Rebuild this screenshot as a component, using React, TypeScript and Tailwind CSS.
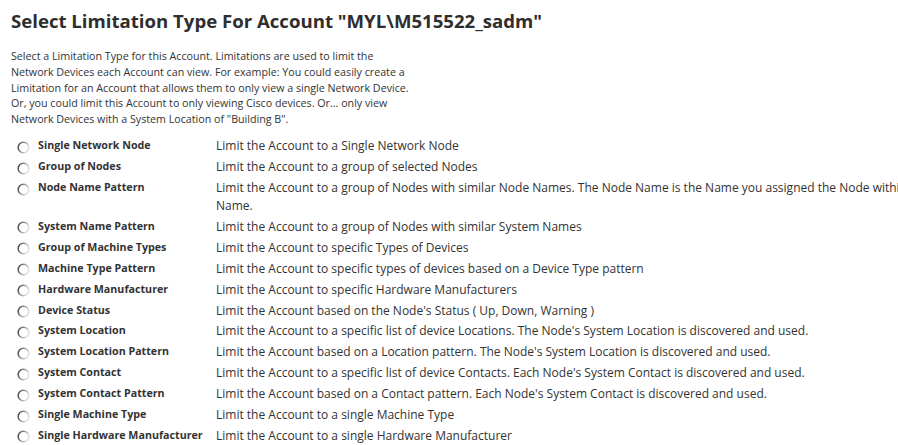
const limitations = [
  { name: 'Single Network Node', desc: 'Limit the Account to a Single Network Node' },
  { name: 'Group of Nodes', desc: 'Limit the Account to a group of selected Nodes' },
  {
    name: 'Node Name Pattern',
    desc: 'Limit the Account to a group of Nodes with similar Node Names. The Node Name is the Name you assigned the Node within Name.',
  },
  { name: 'System Name Pattern', desc: 'Limit the Account to a group of Nodes with similar System Names' },
  { name: 'Group of Machine Types', desc: 'Limit the Account to specific Types of Devices' },
  { name: 'Machine Type Pattern', desc: 'Limit the Account to specific types of devices based on a Device Type pattern' },
  { name: 'Hardware Manufacturer', desc: 'Limit the Account to specific Hardware Manufacturers' },
  { name: 'Device Status', desc: "Limit the Account based on the Node's Status ( Up, Down, Warning )" },
  {
    name: 'System Location',
    desc: "Limit the Account to a specific list of device Locations. The Node's System Location is discovered and used.",
  },
  {
    name: 'System Location Pattern',
    desc: "Limit the Account based on a Location pattern. The Node's System Location is discovered and used.",
  },
  {
    name: 'System Contact',
    desc: "Limit the Account to a specific list of device Contacts. Each Node's System Contact is discovered and used.",
  },
  {
    name: 'System Contact Pattern',
    desc: "Limit the Account based on a Contact pattern. Each Node's System Contact is discovered and used.",
  },
  { name: 'Single Machine Type', desc: 'Limit the Account to a single Machine Type' },
  { name: 'Single Hardware Manufacturer', desc: 'Limit the Account to a single Hardware Manufacturer' },
];

function Radio() {
  return (
    <svg width="13" height="13" viewBox="0 0 13 13" className="block">
      <defs>
        <linearGradient id="ring" x1="0" y1="0" x2="1" y2="0.4">
          <stop offset="0" stopColor="#3a3a3a" />
          <stop offset="0.55" stopColor="#9a9a9a" />
          <stop offset="1" stopColor="#e0e0e0" />
        </linearGradient>
      </defs>
      <circle cx="6.5" cy="6.5" r="5.3" fill="#fff" stroke="url(#ring)" strokeWidth="1.6" />
    </svg>
  );
}

export default function App() {
  return (
    <div
      className="h-screen w-[898px] overflow-hidden bg-white px-[11px] text-[#333]"
      style={{ fontFamily: '"Open Sans", "Liberation Sans", sans-serif' }}
    >
      <h1 className="pt-[7px] text-[18.6px] font-bold leading-[27px] text-[#2e2e2e]">
        Select Limitation Type For Account "MYL\M515522_sadm"
      </h1>

      <p className="mt-[15px] w-[402px] text-[10.7px] leading-[15.75px]">
        Select a Limitation Type for this Account. Limitations are used to limit the Network Devices each Account can
        view. For example: You could easily create a Limitation for an Account that allows them to only view a single
        Network Device. Or, you could limit this Account to only viewing Cisco devices. Or... only view Network Devices
        with a System Location of "Building B".
      </p>

      <div className="mt-[8px] flex flex-col">
        {limitations.map((l) => (
          <div key={l.name} className="flex items-start leading-[17.9px]">
            <div className="flex w-[27px] shrink-0 justify-start pl-[6px] pt-[5px]">
              <Radio />
            </div>
            <div className="w-[178px] shrink-0 py-[1.5px] text-[10.7px] font-bold">{l.name}</div>
            <div className="w-[700px] shrink-0 py-[1.5px] text-[12px]">{l.desc}</div>
          </div>
        ))}
      </div>
    </div>
  );
}
